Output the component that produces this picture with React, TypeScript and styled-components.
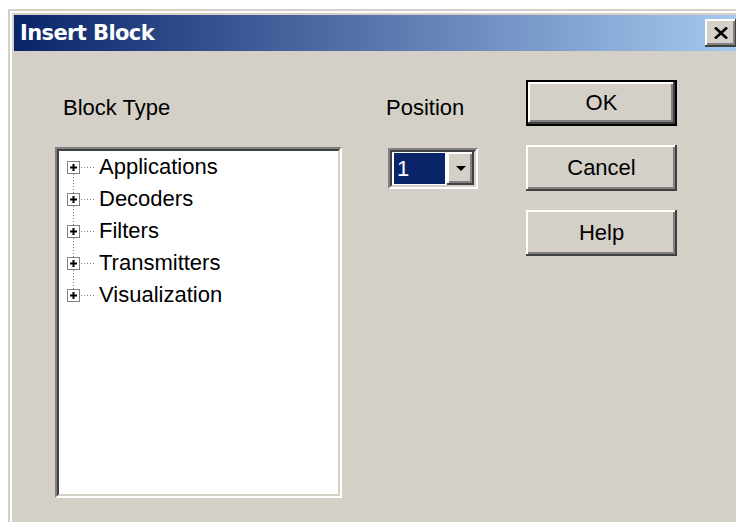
import React from "react";
import styled, { createGlobalStyle } from "styled-components";

const GlobalStyle = createGlobalStyle`
  html, body {
    margin: 0;
    padding: 0;
    background: #ffffff;
    overflow: hidden;
  }
`;

const FACE = "#d4d0c8";
const SHADOW = "#808080";
const DARK = "#404040";
const UI_FONT = `"Liberation Sans", Arial, sans-serif`;

const Page = styled.div`
  width: 736px;
  height: 522px;
  box-sizing: border-box;
  padding: 9px 0 0 8px;
  overflow: hidden;
`;

const Window = styled.div`
  width: 739px;
  height: 540px;
  box-sizing: border-box;
  background: ${FACE};
  border-top: 2px solid ${FACE};
  border-left: 2px solid ${FACE};
`;

const Frame = styled.div`
  height: 100%;
  box-sizing: border-box;
  border-top: 2px solid #ffffff;
  border-left: 2px solid #ffffff;
  padding: 2px 6px 0 2px;
  display: flex;
  flex-direction: column;
`;

const TitleBar = styled.div`
  height: 36px;
  flex: none;
  display: flex;
  align-items: center;
  justify-content: space-between;
  padding-left: 6px;
  background: linear-gradient(to right, #0a246a, #a6caf0);
`;

const Title = styled.span`
  font-family: "DejaVu Sans", Tahoma, sans-serif;
  font-weight: bold;
  font-size: 21px;
  letter-spacing: -0.6px;
  color: #ffffff;
`;

const raised = `
  box-shadow:
    inset -2px -2px ${DARK},
    inset 2px 2px #ffffff,
    inset -4px -4px ${SHADOW},
    inset 4px 4px ${FACE};
`;

const CloseButton = styled.button`
  width: 32px;
  height: 28px;
  margin-right: 4px;
  padding: 0;
  border: none;
  background: ${FACE};
  ${raised}
  display: flex;
  align-items: center;
  justify-content: center;
`;

const Content = styled.div`
  flex: 1;
  display: flex;
  align-items: flex-start;
`;

const TypeColumn = styled.div`
  margin-left: 41px;
  width: 287px;
  display: flex;
  flex-direction: column;
`;

const PositionColumn = styled.div`
  margin-left: 44px;
  width: 92px;
  display: flex;
  flex-direction: column;
`;

const ButtonColumn = styled.div`
  margin-left: 48px;
  margin-top: 29px;
  width: 151px;
  display: flex;
  flex-direction: column;
  gap: 19px;
`;

const Label = styled.div<{ $indent?: number }>`
  margin-top: 44px;
  padding-left: ${(p) => p.$indent ?? 0}px;
  height: 26px;
  line-height: 26px;
  font-family: ${UI_FONT};
  font-size: 22px;
  color: #000;
`;

const sunken = `
  box-sizing: border-box;
  border-style: solid;
  border-width: 2px;
  border-color: ${SHADOW} #ffffff #ffffff ${SHADOW};
`;

const ListBox = styled.div`
  margin-top: 26px;
  height: 351px;
  ${sunken}
  background: ${FACE};
`;

const ListInner = styled.div`
  height: 100%;
  box-sizing: border-box;
  border-style: solid;
  border-width: 2px;
  border-color: ${DARK} ${FACE} ${FACE} ${DARK};
  background: #ffffff;
`;

const TreeRow = styled.div`
  height: 32px;
  display: flex;
  align-items: center;
  font-family: ${UI_FONT};
  font-size: 22px;
  line-height: 32px;
  color: #000;
`;

const Combo = styled.div`
  margin-top: 27px;
  margin-left: 2px;
  width: 90px;
  height: 41px;
  ${sunken}
  background: ${FACE};
`;

const ComboInner = styled.div`
  height: 100%;
  box-sizing: border-box;
  border-style: solid;
  border-width: 2px;
  border-color: ${DARK} ${FACE} ${FACE} ${DARK};
  background: #ffffff;
  display: flex;
`;

const ComboField = styled.div`
  flex: 1;
  padding: 1px 2px;
  display: flex;
`;

const Selected = styled.span`
  flex: 1;
  background: #0a246a;
  color: #ffffff;
  font-family: ${UI_FONT};
  font-size: 22px;
  line-height: 31px;
  padding-left: 3px;
`;

const DropButton = styled.div`
  width: 27px;
  background: ${FACE};
  ${raised}
  display: flex;
  align-items: center;
  justify-content: center;
`;

const PushButton = styled.button<{ $default?: boolean }>`
  height: 46px;
  box-sizing: border-box;
  padding: 0;
  background: ${FACE};
  border: ${(p) => (p.$default ? "2px solid #000" : "none")};
  ${raised}
  font-family: ${UI_FONT};
  font-size: 22px;
  color: #000;
`;

function Expander({ first, last }: { first: boolean; last: boolean }) {
  return (
    <svg width="40" height="32" viewBox="0 0 40 32" style={{ flex: "none" }}>
      {!first && (
        <line x1="14.5" y1="0" x2="14.5" y2="10" stroke={SHADOW} strokeDasharray="1 2" />
      )}
      {!last && (
        <line x1="14.5" y1="23" x2="14.5" y2="32" stroke={SHADOW} strokeDasharray="1 2" />
      )}
      <line x1="22" y1="16.5" x2="37" y2="16.5" stroke={SHADOW} strokeDasharray="1 2" />
      <rect x="8.5" y="10.5" width="12" height="12" fill="#fff" stroke={SHADOW} />
      <line x1="11" y1="16.5" x2="18" y2="16.5" stroke="#000" strokeWidth="2" />
      <line x1="14.5" y1="13" x2="14.5" y2="20" stroke="#000" strokeWidth="2" />
    </svg>
  );
}

const categories = ["Applications", "Decoders", "Filters", "Transmitters", "Visualization"];

export default function App() {
  return (
    <Page>
      <GlobalStyle />
      <Window>
        <Frame>
          <TitleBar>
            <Title>Insert Block</Title>
            <CloseButton aria-label="Close">
              <svg width="14" height="12" viewBox="0 0 14 12">
                <path d="M1 0.5 L13 11.5 M13 0.5 L1 11.5" stroke="#000" strokeWidth="2.6" />
              </svg>
            </CloseButton>
          </TitleBar>
          <Content>
            <TypeColumn>
              <Label $indent={8}>Block Type</Label>
              <ListBox>
                <ListInner>
                  {categories.map((name, i) => (
                    <TreeRow key={name}>
                      <Expander first={i === 0} last={i === categories.length - 1} />
                      {name}
                    </TreeRow>
                  ))}
                </ListInner>
              </ListBox>
            </TypeColumn>
            <PositionColumn>
              <Label>Position</Label>
              <Combo>
                <ComboInner>
                  <ComboField>
                    <Selected>1</Selected>
                  </ComboField>
                  <DropButton>
                    <svg width="10" height="5" viewBox="0 0 10 5">
                      <path d="M0 0 H10 L5 5 Z" fill="#000" />
                    </svg>
                  </DropButton>
                </ComboInner>
              </Combo>
            </PositionColumn>
            <ButtonColumn>
              <PushButton $default>OK</PushButton>
              <PushButton>Cancel</PushButton>
              <PushButton>Help</PushButton>
            </ButtonColumn>
          </Content>
        </Frame>
      </Window>
    </Page>
  );
}
